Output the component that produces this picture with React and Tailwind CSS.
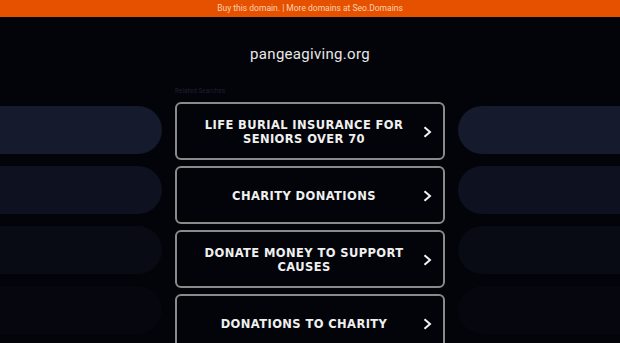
const links = [
  ['LIFE BURIAL INSURANCE FOR', 'SENIORS OVER 70'],
  ['CHARITY DONATIONS'],
  ['DONATE MONEY TO SUPPORT', 'CAUSES'],
  ['DONATIONS TO CHARITY'],
]

const pillColors = ['bg-[#151a2c]', 'bg-[#0e1120]', 'bg-[#080a14]', 'bg-[#05060e]']

function Chevron() {
  return (
    <svg width="9" height="12" viewBox="0 0 9 12" className="shrink-0 mt-[1px]">
      <path d="M1.5 1.2 L7 6 L1.5 10.8" fill="none" stroke="#f2f2f2" strokeWidth="2" strokeLinejoin="miter" />
    </svg>
  )
}

function LinkBox({ lines }) {
  return (
    <div className="h-[58px] rounded-[6px] border-2 border-[#8a8a8a] flex items-center pl-4 pr-[11px]">
      <div className="flex-1 pt-[2px] text-center text-[11.5px] leading-[14px] font-bold text-[#f0f0f0] tracking-[0.4px] font-['DejaVu_Sans',sans-serif] pr-2">
        {lines.map((l, i) => (
          <div key={i}>{l}</div>
        ))}
      </div>
      <Chevron />
    </div>
  )
}

export default function App() {
  return (
    <div className="w-[620px] h-[343px] overflow-hidden bg-[#030409] font-['Roboto',sans-serif]">
      <div className="h-[17px] bg-[#e65100] flex items-center justify-center text-[8.5px] text-[#fbd2b0]">
        Buy this domain. | More domains at Seo.Domains
      </div>
      <div className="mt-[27px] h-[20px] leading-[20px] text-center text-[15px] text-[#e8e8e8] tracking-[0.3px]">
        pangeagiving.org
      </div>
      <div className="mt-[21px] flex">
        <div className="w-[162px] pt-[21px] flex flex-col gap-3">
          {pillColors.map((c, i) => (
            <div key={i} className={`h-[48px] rounded-r-full ${c}`}></div>
          ))}
        </div>
        <div className="w-[270px] mx-[13px]">
          <div className="h-[12px] leading-[12px] text-[6.5px] text-[#1c2033] mb-[5px]">Related Searches</div>
          <div className="flex flex-col gap-[6px]">
            {links.map((l, i) => (
              <LinkBox key={i} lines={l} />
            ))}
          </div>
        </div>
        <div className="flex-1 pt-[21px] flex flex-col gap-3">
          {pillColors.map((c, i) => (
            <div key={i} className={`h-[48px] rounded-l-full ${c}`}></div>
          ))}
        </div>
      </div>
    </div>
  )
}
